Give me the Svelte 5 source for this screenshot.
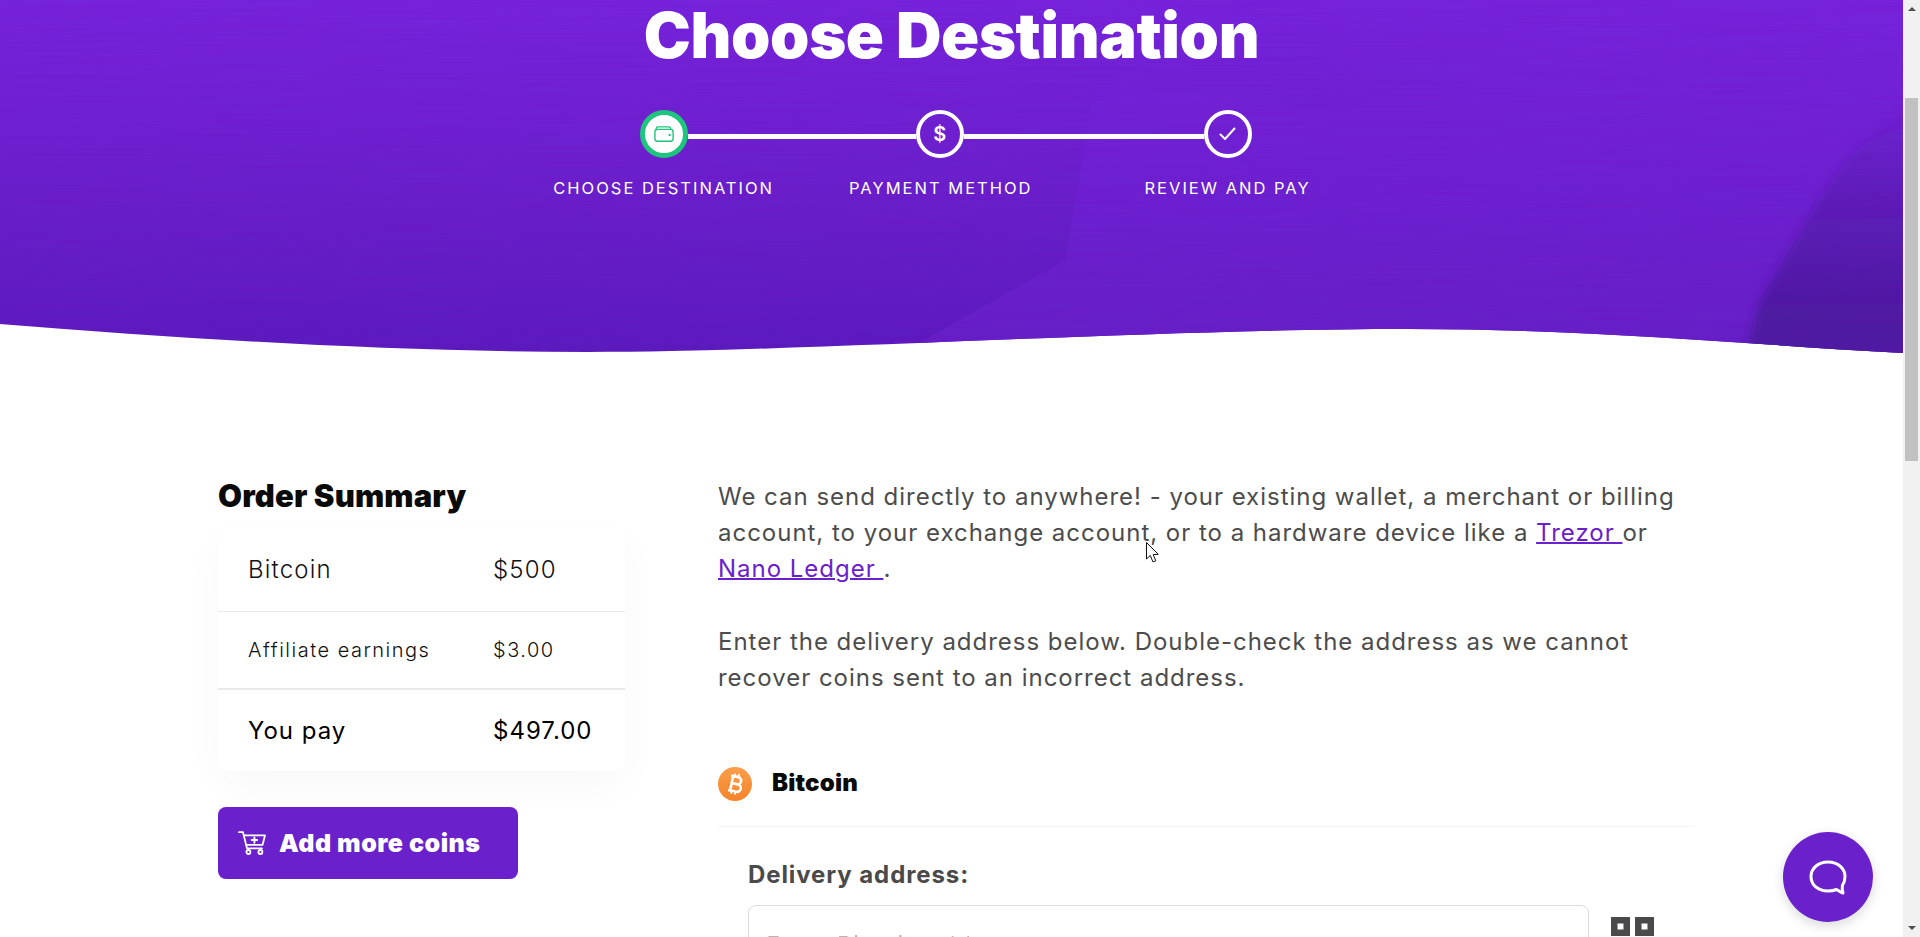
<script>
  const summary = [
    { label: 'Bitcoin', price: '$500', kind: 'coin' },
    { label: 'Affiliate earnings', price: '$3.00', kind: 'fee' },
    { label: 'You pay', price: '$497.00', kind: 'total' }
  ];
</script>

<div class="page">
  <main class="main">
    <header class="hero">
      <svg class="hero-bg" viewBox="0 0 1903 354" width="1903" height="354" aria-hidden="true">
        <defs>
          <linearGradient id="base" x1="0" y1="0" x2="0" y2="1">
            <stop offset="0" stop-color="#7524dc" />
            <stop offset="0.5" stop-color="#6a20cc" />
            <stop offset="1" stop-color="#591bbc" />
          </linearGradient>
          <linearGradient id="band" x1="0" y1="0" x2="0" y2="1">
            <stop offset="0" stop-color="#7524dc" />
            <stop offset="0.55" stop-color="#6c21d0" />
            <stop offset="1" stop-color="#6420c6" />
          </linearGradient>
          <linearGradient id="edge" x1="0" y1="0" x2="0" y2="1">
            <stop offset="0" stop-color="#4b1a9f" stop-opacity="0" />
            <stop offset="0.45" stop-color="#4b1a9f" stop-opacity="0.55" />
            <stop offset="0.8" stop-color="#4b1a9f" />
            <stop offset="1" stop-color="#4b1a9f" />
          </linearGradient>
          <filter id="soft" x="-5%" y="-5%" width="110%" height="110%">
            <feGaussianBlur stdDeviation="5" />
          </filter>
          <filter id="brush" x="0" y="0" width="100%" height="100%">
            <feTurbulence type="fractalNoise" baseFrequency="0.006 0.5" numOctaves="2" seed="4" />
            <feColorMatrix values="0 0 0 0 0.2  0 0 0 0 0  0 0 0 0 0.5  0 0 0 0.35 -0.12" />
          </filter>
          <clipPath id="wave">
            <path d="M0 324 C200 340 400 352 588 352 C800 352 1150 329 1408 329 C1600 329 1750 345 1903 353 L1903 0 L0 0 Z" />
          </clipPath>
        </defs>
        <g clip-path="url(#wave)">
          <rect width="1903" height="354" fill="url(#base)" />
          <path d="M1096 83 L1065 260 L900 354 L1903 354 L1903 0 L1580 0 L1347 113 Z" fill="url(#band)" />
          <path d="M1925 90 L1850 157 L1820 197 L1760 300 L1740 375 L1925 375 Z" fill="url(#edge)" filter="url(#soft)" />
          <rect width="1903" height="354" filter="url(#brush)" />
        </g>
      </svg>

      <h1 class="title">Choose Destination</h1>

      <div class="track">
        <span class="dot dot-active">
          <svg viewBox="0 0 20 16" width="20" height="16" fill="none" stroke="#1fc47d" stroke-width="1.4" stroke-linejoin="round">
            <path d="M2.200 4.200 V2.600 A1.800 1.800 0 0 1 4 .9 H15 A2 2 0 0 1 16.600 3.400" />
            <rect x=".9" y="3.400" width="18.200" height="11.800" rx="2.400" />
            <rect x="14.600" y="8" width="2" height="2" fill="#1fc47d" stroke="none" />
          </svg>
        </span>
        <span class="line line-a"></span>
        <span class="dot"><span class="dollar">$</span></span>
        <span class="line line-b"></span>
        <span class="dot">
          <svg viewBox="0 0 17 14" width="17" height="14" fill="none" stroke="#fff" stroke-width="2" stroke-linecap="round" stroke-linejoin="round">
            <path d="M1.500 7.500 L6 12 L15.500 1.500" />
          </svg>
        </span>
      </div>

      <div class="labels">
        <span class="label label-a">CHOOSE DESTINATION</span>
        <span class="label label-b">PAYMENT METHOD</span>
        <span class="label label-c">REVIEW AND PAY</span>
      </div>
    </header>

    <section class="content">
      <aside class="side">
        <h2 class="side-title">Order Summary</h2>
        <div class="card">
          {#each summary as row}
            <div class="row row-{row.kind}">
              <span>{row.label}</span>
              <span>{row.price}</span>
            </div>
          {/each}
        </div>
        <button class="add">
          <svg viewBox="0 0 28 24" width="28" height="24" fill="none" stroke="#fff" stroke-width="1.8" stroke-linecap="round" stroke-linejoin="round">
            <path d="M1 1.200 H5 L9 17.400 H24" />
            <path d="M5.800 4.400 H27 L24.600 13.800 H8.200" />
            <path d="M16.400 6.400 V11.800 M13.700 9.100 H19.100" stroke-width="2" />
            <circle cx="10.400" cy="21" r="2" />
            <circle cx="22.400" cy="21" r="2" />
          </svg>
          <span>Add more coins</span>
        </button>
      </aside>

      <div class="details">
        <p class="copy">We can send directly to anywhere! - your existing wallet, a merchant or billing account, to your exchange account, or to a hardware device like a <a href="#top">Trezor&nbsp;</a>or <a href="#top">Nano Ledger&nbsp;</a>.</p>
        <p class="copy copy-next">Enter the delivery address below. Double-check the address as we cannot recover coins sent to an incorrect address.</p>

        <div class="coin">
          <svg viewBox="0 0 34 34" width="34" height="34" aria-hidden="true">
            <defs>
              <linearGradient id="btc" x1="0" y1="0" x2="0" y2="1">
                <stop offset="0" stop-color="#fb9e4a" />
                <stop offset="1" stop-color="#f5842c" />
              </linearGradient>
            </defs>
            <circle cx="17" cy="17" r="17" fill="url(#btc)" />
            <g transform="rotate(12 17 17)" fill="none" stroke="#fff" stroke-width="2.600">
              <path d="M11.500 9.600 H18.800 A3.600 3.600 0 0 1 18.800 16.800 H13.400 M13.400 16.800 H19.800 A3.800 3.800 0 0 1 19.800 24.400 H11.500 M13.600 9.600 V24.400" />
              <path d="M15.200 6.600 V9.600 M19 6.600 V9.600 M15.200 24.400 V27.400 M19 24.400 V27.400" stroke-width="1.800" />
            </g>
          </svg>
          <span class="coin-name">Bitcoin</span>
        </div>

        <div class="delivery">
          <label class="field-label" for="address">Delivery address:</label>
          <div class="field">
            <input id="address" class="input" placeholder="Enter Bitcoin address" />
            <svg class="qr" viewBox="0 0 43 43" width="43" height="43" aria-hidden="true">
              <path d="M0 0 H19 V19 H0 Z M6.500 6.500 V12.500 H12.500 V6.500 Z M24 0 H43 V19 H24 Z M30.500 6.500 V12.500 H36.500 V6.500 Z M0 24 H19 V43 H0 Z M24 24 H43 V43 H24 Z" fill="#4a4a4a" fill-rule="evenodd" />
            </svg>
          </div>
        </div>
      </div>
    </section>

    <button class="chat" aria-label="Open chat">
      <svg viewBox="0 0 38 35" width="38" height="35" fill="none" stroke="#fff" stroke-width="3" stroke-linejoin="round">
        <path d="M19 2 C9 2 2 8.500 2 16.500 C2 25 9 31 19 31 C22 31 25 30.500 27.500 29.500 C29.500 30.800 32 32.800 34 33 C33.300 30.500 33 27.500 33.400 25.500 C35 23 36 20 36 16.500 C36 8.500 29 2 19 2 Z" />
      </svg>
    </button>

    <svg class="cursor" viewBox="0 0 13 21" width="13" height="21" aria-hidden="true">
      <path d="M.5 .5 V17 L4.300 13.500 L7 20 L9.800 18.800 L7.200 12.600 L12.300 12.300 Z" fill="#fff" stroke="#111" stroke-width="1" stroke-linejoin="miter" />
    </svg>
  </main>

  <div class="scrollbar" aria-hidden="true">
    <span class="arrow arrow-up"></span>
    <span class="thumb"></span>
    <span class="arrow arrow-down"></span>
  </div>
</div>

<style>
  :global(body) {
    margin: 0;
    background: #fff;
  }

  .page {
    display: flex;
    width: 1920px;
    height: 937px;
    overflow: hidden;
    font-family: Inter, "Liberation Sans", sans-serif;
    color: #4a4a4a;
  }

  .main {
    position: relative;
    flex: 1;
    min-width: 0;
    height: 937px;
    overflow: hidden;
    background: #fff;
  }

  /* header */
  .hero {
    position: relative;
    height: 354px;
    color: #fff;
  }
  .hero-bg {
    position: absolute;
    top: 0;
    left: 0;
    z-index: 0;
  }
  .title {
    position: relative;
    margin: 0;
    text-align: center;
    font-size: 63px;
    line-height: 70px;
    font-weight: 900;
    letter-spacing: -0.35px;
  }
  .track {
    position: relative;
    display: flex;
    align-items: center;
    justify-content: center;
    padding-right: 11px;
    margin-top: 40px;
  }
  .dot {
    display: flex;
    align-items: center;
    justify-content: center;
    box-sizing: border-box;
    width: 48px;
    height: 48px;
    border: 4px solid #fff;
    border-radius: 50%;
    flex: none;
  }
  .dot-active {
    border-color: #1fc47d;
    background: #fff;
    border-width: 5px;
  }
  .dollar {
    font-size: 20px;
    font-weight: 600;
    line-height: 1;
    color: #fff;
  }
  .line {
    height: 5px;
    margin-top: 5px;
    background: #fff;
    flex: none;
  }
  .line-a { width: 227.5px; }
  .line-b { width: 240px; }
  .labels {
    position: relative;
    display: flex;
    justify-content: center;
    padding-right: 39px;
    margin-top: 18px;
  }
  .label {
    font-size: 16.5px;
    line-height: 24px;
    font-weight: 400;
    letter-spacing: 2px;
    white-space: nowrap;
  }
  .label-b { margin-left: 75px; }
  .label-c { margin-left: 112px; }

  /* body */
  .content {
    display: grid;
    grid-template-columns: 407px 1fr;
    column-gap: 93px;
    padding: 120px 0 0 218px;
  }

  .side-title {
    margin: 3px 0 0;
    font-size: 31px;
    line-height: 38px;
    font-weight: 900;
    letter-spacing: 0.15px;
    color: #0a0a0a;
  }
  .card {
    margin-top: 13px;
    border-radius: 10px;
    background: #fff;
    box-shadow: 0 14px 40px rgba(0, 0, 0, 0.03);
  }
  .row {
    display: grid;
    grid-template-columns: 245px 1fr;
    align-items: center;
    padding-left: 30px;
    color: #111;
  }
  .row-coin {
    height: 83px;
    border-bottom: 1px solid #e9e9ec;
    font-size: 24px;
    font-weight: 300;
    letter-spacing: 1.2px;
  }
  .row-fee {
    height: 76px;
    border-bottom: 2px solid #e9e9ec;
    font-size: 20px;
    font-weight: 300;
    letter-spacing: 1.5px;
  }
  .row-total {
    height: 81px;
    font-size: 24px;
    font-weight: 400;
    letter-spacing: 1px;
    color: #000;
  }
  .add {
    display: flex;
    align-items: center;
    gap: 13px;
    width: 300px;
    height: 72px;
    margin-top: 36px;
    padding: 0 0 0 20px;
    border: 0;
    border-radius: 8px;
    background: #6a21cc;
    color: #fff;
    font-family: inherit;
    font-size: 25px;
    font-weight: 900;
    letter-spacing: 0.5px;
  }

  .details {
    width: 960px;
    padding-top: 5px;
  }
  .copy {
    margin: 0;
    font-size: 24px;
    line-height: 36px;
    font-weight: 400;
    letter-spacing: 0.98px;
    color: #4c4c4c;
  }
  .copy-next {
    margin-top: 37px;
  }
  .copy a {
    color: #6a21cc;
    text-decoration-thickness: 2px;
  }
  .coin {
    display: flex;
    align-items: center;
    gap: 20px;
    margin-top: 71px;
  }
  .coin-name {
    padding-bottom: 3px;
    font-size: 24px;
    line-height: 31px;
    font-weight: 900;
    letter-spacing: 0.2px;
    color: #0a0a0a;
  }
  .delivery {
    margin-top: 25px;
    border-top: 1px solid #f5f5f5;
    padding: 33px 0 0 30px;
    width: 945px;
  }
  .field-label {
    display: block;
    font-size: 24px;
    line-height: 30px;
    font-weight: 700;
    letter-spacing: 0.9px;
    color: #4a4a4a;
  }
  .field {
    display: flex;
    align-items: flex-start;
    gap: 22px;
    margin-top: 15px;
  }
  .input {
    box-sizing: border-box;
    width: 841px;
    height: 70px;
    padding: 10px 17px 0;
    border: 1px solid #dcdcdc;
    border-radius: 8px;
    font-family: inherit;
    font-size: 24px;
    font-weight: 300;
    letter-spacing: 1px;
    background: #fff;
  }
  .input::placeholder {
    color: #b5b5b5;
  }
  .qr {
    margin-top: 12px;
    flex: none;
  }

  /* overlays */
  .chat {
    position: absolute;
    left: 1783px;
    top: 832px;
    display: flex;
    align-items: center;
    justify-content: center;
    width: 90px;
    height: 90px;
    padding: 0;
    border: 0;
    border-radius: 50%;
    background: #6a21cc;
    box-shadow: 0 4px 12px rgba(0, 0, 0, 0.15);
  }
  .cursor {
    position: absolute;
    left: 1146px;
    top: 542px;
  }

  /* fake window scrollbar */
  .scrollbar {
    display: flex;
    flex-direction: column;
    align-items: center;
    flex: none;
    width: 17px;
    height: 937px;
    background: #f1f1f1;
  }
  .thumb {
    width: 13px;
    height: 363px;
    margin-top: 81px;
    background: #c1c1c1;
  }
  .arrow {
    display: block;
    width: 0;
    height: 0;
    flex: none;
    border-left: 4px solid transparent;
    border-right: 4px solid transparent;
  }
  .arrow-up {
    height: 0;
    margin-top: 7px;
    margin-bottom: 6px;
    border-bottom: 4px solid #505050;
  }
  .arrow-down {
    margin-top: auto;
    margin-bottom: 7px;
    border-top: 4px solid #505050;
  }
</style>
